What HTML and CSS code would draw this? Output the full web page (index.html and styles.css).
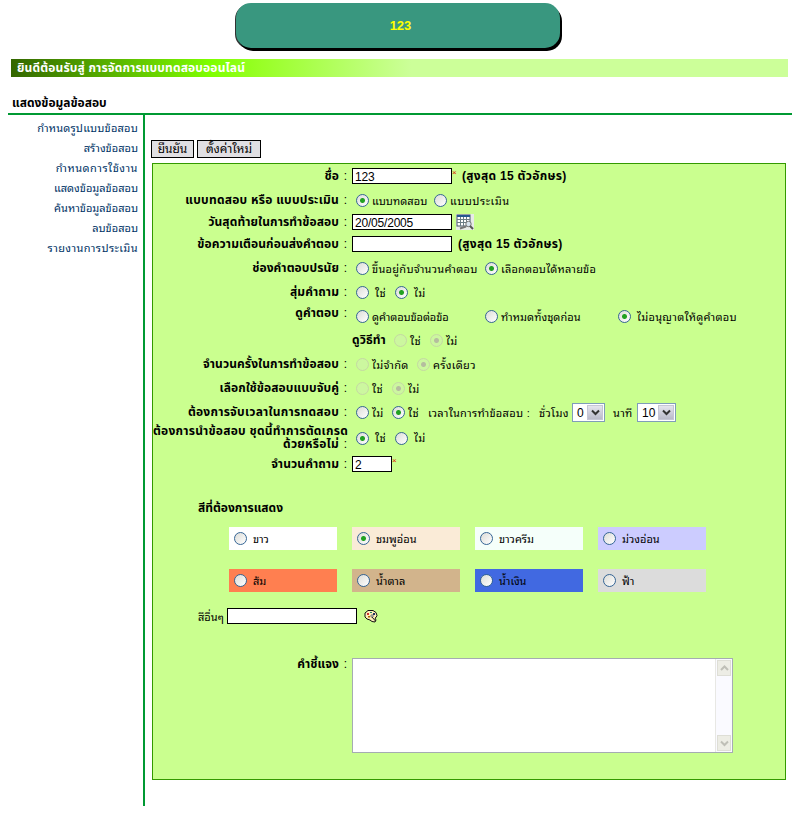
FILE: index.html
```html
<!DOCTYPE html>
<html lang="th">
<head>
<meta charset="utf-8">
<title>แสดงข้อมูลข้อสอบ</title>
<link rel="stylesheet" href="styles.css">
</head>
<body>
<header class="badge">123</header>
<div class="welcome"><span>ยินดีต้อนรับสู่ การจัดการแบบทดสอบออนไลน์</span></div>
<h1 class="title"><span>แสดงข้อมูลข้อสอบ</span></h1>
<div class="layout">
  <nav class="menu">
    <a class="ls2">กำหนดรูปแบบข้อสอบ</a>
    <a>สร้างข้อสอบ</a>
    <a class="ls5">กำหนดการใช้งาน</a>
    <a>แสดงข้อมูลข้อสอบ</a>
    <a>ค้นหาข้อมูลข้อสอบ</a>
    <a>ลบข้อสอบ</a>
    <a class="ls4">รายงานการประเมิน</a>
  </nav>
  <main class="content">
    <div class="actions"><button class="btn confirm">ยืนยัน</button><button class="btn reset">ตั้งค่าใหม่</button></div>
    <form class="panel">
      <div class="row"><div class="label">ชื่อ<s>:</s></div><div class="field"><span class="box w100">123</span><i class="req">×</i><b class="hint">(สูงสุด 15 ตัวอักษร)</b></div></div>
      <div class="row"><div class="label wide">แบบทดสอบ หรือ แบบประเมิน<s>:</s></div><div class="field opts"><i class="radio on"></i><span class="t ls0 w62">แบบทดสอบ</span><i class="radio"></i><span class="t ls5">แบบประเมิน</span></div></div>
      <div class="row short"><div class="label">วันสุดท้ายในการทำข้อสอบ<s>:</s></div><div class="field"><span class="box w100">20/05/2005</span>
        <svg class="cal" width="18" height="16" viewBox="0 0 18 16"><rect width="18" height="16" fill="#e8ebe8"/><rect x="1" y="1" width="13" height="11" fill="#fff" stroke="#456" /><path d="M1 2h13" stroke="#25588f" stroke-width="2"/><path d="M1 5.5h13M1 8.500h13M4.500 3v9M7.500 3v9M10.500 3v9" stroke="#6b7d85"/><path d="M4 14.500L10 12.500" stroke="#777" stroke-width="2"/><circle cx="12.500" cy="10" r="2.700" fill="#d7e4ef" stroke="#777"/><path d="M14 12l3 3" stroke="#555" stroke-width="2"/></svg></div></div>
      <div class="row"><div class="label">ข้อความเตือนก่อนส่งคำตอบ<s>:</s></div><div class="field"><span class="box w100"></span><b class="hint near">(สูงสุด 15 ตัวอักษร)</b></div></div>
      <div class="row"><div class="label">ช่องคำตอบปรนัย<s>:</s></div><div class="field opts"><i class="radio"></i><span class="t w113">ขึ้นอยู่กับจำนวนคำตอบ</span><i class="radio on"></i><span class="t ls2">เลือกตอบได้หลายข้อ</span></div></div>
      <div class="row"><div class="label">สุ่มคำถาม<s>:</s></div><div class="field opts"><i class="radio"></i><span class="t sp w23">ใช่</span><i class="radio on"></i><span class="t sp">ไม่</span></div></div>
      <div class="row"><div class="label up">ดูคำตอบ<s>:</s></div><div class="field opts"><i class="radio"></i><span class="t tight w113">ดูคำตอบข้อต่อข้อ</span><i class="radio"></i><span class="t ls0 w117">ทำหมดทั้งชุดก่อน</span><i class="radio on"></i><span class="t sp">ไม่อนุญาตให้ดูคำตอบ</span></div></div>
      <div class="row"><div class="label"></div><div class="field"><b class="sub">ดูวิธีทำ</b><i class="radio off"></i><span class="t w20">ใช่</span><i class="radio off on"></i><span class="t">ไม่</span></div></div>
      <div class="row"><div class="label">จำนวนครั้งในการทำข้อสอบ<s>:</s></div><div class="field opts"><i class="radio off"></i><span class="t w45">ไม่จำกัด</span><i class="radio off on"></i><span class="t">ครั้งเดียว</span></div></div>
      <div class="row"><div class="label">เลือกใช้ข้อสอบแบบจับคู่<s>:</s></div><div class="field opts"><i class="radio off"></i><span class="t w20">ใช่</span><i class="radio off on"></i><span class="t">ไม่</span></div></div>
      <div class="row"><div class="label wide">ต้องการจับเวลาในการทดสอบ<s>:</s></div><div class="field opts"><i class="radio"></i><span class="t w20">ไม่</span><i class="radio on"></i><span class="t w17">ใช่</span><span class="t w112">เวลาในการทำข้อสอบ :</span><span class="t w34">ชั่วโมง</span><span class="select h">0<i><svg width="9" height="7" viewBox="0 0 9 7"><path d="M1 1.500l3.500 3.500L8 1.500"/></svg></i></span><span class="t w24">นาที</span><span class="select m">10<i><svg width="9" height="7" viewBox="0 0 9 7"><path d="M1 1.500l3.500 3.500L8 1.500"/></svg></i></span></div></div>
      <div class="row tall"><div class="label wide">ต้องการนำข้อสอบ ชุดนี้ทำการตัดเกรด<br>ด้วยหรือไม่<s>:</s></div><div class="field opts"><i class="radio on"></i><span class="t sp w23">ใช่</span><i class="radio"></i><span class="t sp">ไม่</span></div></div>
      <div class="row"><div class="label">จำนวนคำถาม<s>:</s></div><div class="field"><span class="box w40">2</span><i class="req">×</i></div></div>
      <h2 class="subtitle">สีที่ต้องการแสดง</h2>
      <div class="swatches">
        <div class="sw white"><i class="radio"></i><span>ขาว</span></div>
        <div class="sw pink"><i class="radio on"></i><span>ชมพูอ่อน</span></div>
        <div class="sw mint"><i class="radio"></i><span>ขาวครีม</span></div>
        <div class="sw lilac"><i class="radio"></i><span>ม่วงอ่อน</span></div>
        <div class="sw orange"><i class="radio"></i><span>ส้ม</span></div>
        <div class="sw tan"><i class="radio"></i><span>น้ำตาล</span></div>
        <div class="sw blue"><i class="radio"></i><span>น้ำเงิน</span></div>
        <div class="sw gray"><i class="radio"></i><span>ฟ้า</span></div>
      </div>
      <div class="other"><span class="t ls0 w29">สีอื่นๆ</span><span class="box w130"></span>
        <svg class="palette" width="14" height="14" viewBox="0 0 14 14"><path d="M4 1.500h5l3 2 1 3-1 2-1 .5 1 2-1 2-3-.500-2-1.500-3-1L1 8V4z" fill="#ffeeb8" stroke="#111"/><path d="M8 8l3.500 4" stroke="#111"/><rect x="3" y="4" width="2" height="2" fill="#c33"/><rect x="6" y="3" width="2" height="1" fill="#286"/><rect x="9" y="4" width="2" height="2" fill="#236"/><rect x="4" y="7" width="2" height="1.500" fill="#a60"/><circle cx="8" cy="7" r="1.200" fill="#fff" stroke="#111" stroke-width=".6"/></svg></div>
      <div class="note"><div class="label">คำชี้แจง<s>:</s></div>
        <div class="area"><div class="scroll"><i><svg width="9" height="7" viewBox="0 0 9 7"><path d="M1 5l3.500-3.500L8 5"/></svg></i><i><svg width="9" height="7" viewBox="0 0 9 7"><path d="M1 1.500l3.500 3.500L8 1.500"/></svg></i></div></div></div>
    </form>
  </main>
</div>
</body>
</html>
```
FILE: styles.css
```css
* { box-sizing: border-box; }
body { margin: 0; width: 811px; height: 819px; overflow: hidden; background: #fff; color: #000; font: 11px/16px "Liberation Sans", "Noto Sans Thai Looped", "Noto Looped Thai", "Loma", "Waree", "Garuda", "Noto Sans Thai", sans-serif; }
.welcome, .title, .label, .hint, .sub, .subtitle { font-family: "Liberation Sans", "Noto Sans Thai", "Loma", sans-serif; }
i { font-style: normal; }
s { display: inline-block; width: 9px; padding-right: 1px; text-decoration: none; font-weight: normal; letter-spacing: 0; }
.badge { width: 324px; height: 45px; margin: 3px 0 0 236px; border-radius: 15px; background: #39977f; box-shadow: 2px 3px 0 #000, -1px 1px 0 #333; color: #ff0; font-weight: bold; font-size: 13px; line-height: 45px; text-align: center; padding-left: 5px; }
.welcome { width: 777px; height: 18px; margin: 11px 0 0 11px; padding-left: 6px; background: linear-gradient(90deg, #360 0, #7fff00 200px, #99ff26 250px, #cf9 400px); color: #fff; font-weight: bold; font-size: 12px; letter-spacing: .15px; line-height: 18px; white-space: nowrap; }
.title { width: 784px; height: 38px; margin: 0 0 0 8px; padding: 18px 0 0 4px; border-bottom: 2px solid #093; font-size: 12px; line-height: 16px; white-space: nowrap; }
.layout { display: flex; margin-left: 8px; height: 691px; }
.menu { width: 137px; border-right: 2px solid #093; padding: 3px 5px 0 0; display: flex; flex-direction: column; }
.menu a { height: 20px; line-height: 20px; text-align: right; color: #036; white-space: nowrap; }
.content { padding: 25px 0 0 6px; }
.actions { display: flex; gap: 3px; height: 18px; }
.btn { height: 18px; border: 1px solid #000; background: #e0dfe3; padding: 0; font: inherit; font-size: 12px; line-height: 16px; color: #000; }
.confirm { width: 43px; }
.reset { width: 64px; }
.panel { width: 634px; height: 617px; margin: 5px 0 0 1px; border: 1px solid #390; background: #caff8f; }
.row { display: flex; height: 24px; align-items: center; white-space: nowrap; }
.row.short { height: 20px; }
.row.tall { height: 28px; line-height: 13px; }
.label { width: 195px; flex: none; text-align: right; font-weight: bold; font-size: 12px; letter-spacing: .1px; white-space: nowrap; }
.label.wide { letter-spacing: .25px; }
.label.up { margin-top: -6px; }
.field { display: flex; align-items: center; padding-left: 4px; }
.opts { padding-left: 8px; }
.box { display: block; flex: none; height: 16px; border: 1px solid #000; background: #fff; padding-left: 2px; font-size: 12px; letter-spacing: -.2px; line-height: 16px; }
.w100 { width: 100px; }
.w40 { width: 40px; }
.w130 { width: 130px; }
.req { color: #d20; font-size: 8px; line-height: 8px; width: 5px; margin-top: -6px; }
.hint { margin-left: 5px; font-size: 12px; letter-spacing: .3px; }
.hint.near { margin-left: 6px; }
.sub { width: 42px; font-size: 12px; letter-spacing: .1px; }
.radio { flex: none; width: 13px; height: 13px; border: 1px solid #356595; border-radius: 50%; background: linear-gradient(135deg, #dcdcd7, #fff); }
.radio.on { background: radial-gradient(circle, #21a121 0 2px, transparent 3px), linear-gradient(135deg, #dcdcd7, #fff); }
.radio.off { border-color: #c5d8a4; background: #ccf79f; }
.radio.off.on { background: radial-gradient(circle, #b5bd9f 0 2px, #ccf79f 3px); }
.t { flex: none; padding: 1px 0 0 3px; letter-spacing: .3px; white-space: nowrap; }
.tight { letter-spacing: -.1px; }
.ls0 { letter-spacing: .05px; }
.ls2 { letter-spacing: .2px; }
.ls4 { letter-spacing: .4px; }
.ls5 { letter-spacing: .5px; }
.t.sp { padding-left: 6px; }
.w62 { width: 65px; }
.w113 { width: 116px; }
.w117 { width: 120px; }
.w23 { width: 26px; }
.w20 { width: 23px; }
.w45 { width: 48px; }
.w17 { width: 20px; }
.w112 { width: 112px; }
.w34 { width: 35px; padding-left: 2px; }
.w24 { width: 32px; padding-left: 8px; }
.w29 { width: 30px; padding-left: 1px; }
.select { display: flex; justify-content: space-between; height: 19px; border: 1px solid #7f9db9; background: #fff; padding: 0 1px 0 4px; font-size: 12px; line-height: 18px; }
.select.h { width: 33px; }
.select.m { width: 39px; }
.select i { width: 16px; height: 15px; margin-top: 1px; background: linear-gradient(#e5e5ee, #b9bac9); border: 1px solid #c5c6d5; display: flex; align-items: center; justify-content: center; }
.select path { fill: none; stroke: #333; stroke-width: 2; }
.cal { margin-left: 4px; }
.subtitle { margin: 24px 0 0 45px; font-size: 12px; line-height: 16px; white-space: nowrap; }
.swatches { display: grid; grid-template-columns: repeat(4, 108px); column-gap: 15px; row-gap: 19px; margin: 11px 0 0 76px; }
.sw { height: 23px; display: flex; align-items: center; padding-left: 5px; gap: 6px; white-space: nowrap; }
.sw span { padding-top: 1px; }
.white { background: #fff; }
.pink { background: #faebd7; }
.mint { background: #f5fffa; }
.lilac { background: #ccf; }
.orange { background: #ff7f50; }
.tan { background: #d2b48c; }
.blue { background: #4169e1; }
.gray { background: #dcdcdc; }
.other { display: flex; align-items: center; height: 24px; margin: 12px 0 0 44px; }
.palette { margin-left: 7px; }
.note { display: flex; margin-top: 30px; }
.note .label { margin-top: -2px; }
.area { width: 381px; height: 95px; margin-left: 4px; border: 1px solid #a5acb2; background: #fff; display: flex; justify-content: flex-end; }
.scroll { width: 17px; background: #fafaff; border-left: 1px solid #e8e8e4; display: flex; flex-direction: column; justify-content: space-between; padding: 1px; }
.scroll i { height: 16px; background: #ededE5; border: 1px solid #deded6; display: flex; align-items: center; justify-content: center; }
.scroll path { fill: none; stroke: #bfbfb7; stroke-width: 2; }
```
